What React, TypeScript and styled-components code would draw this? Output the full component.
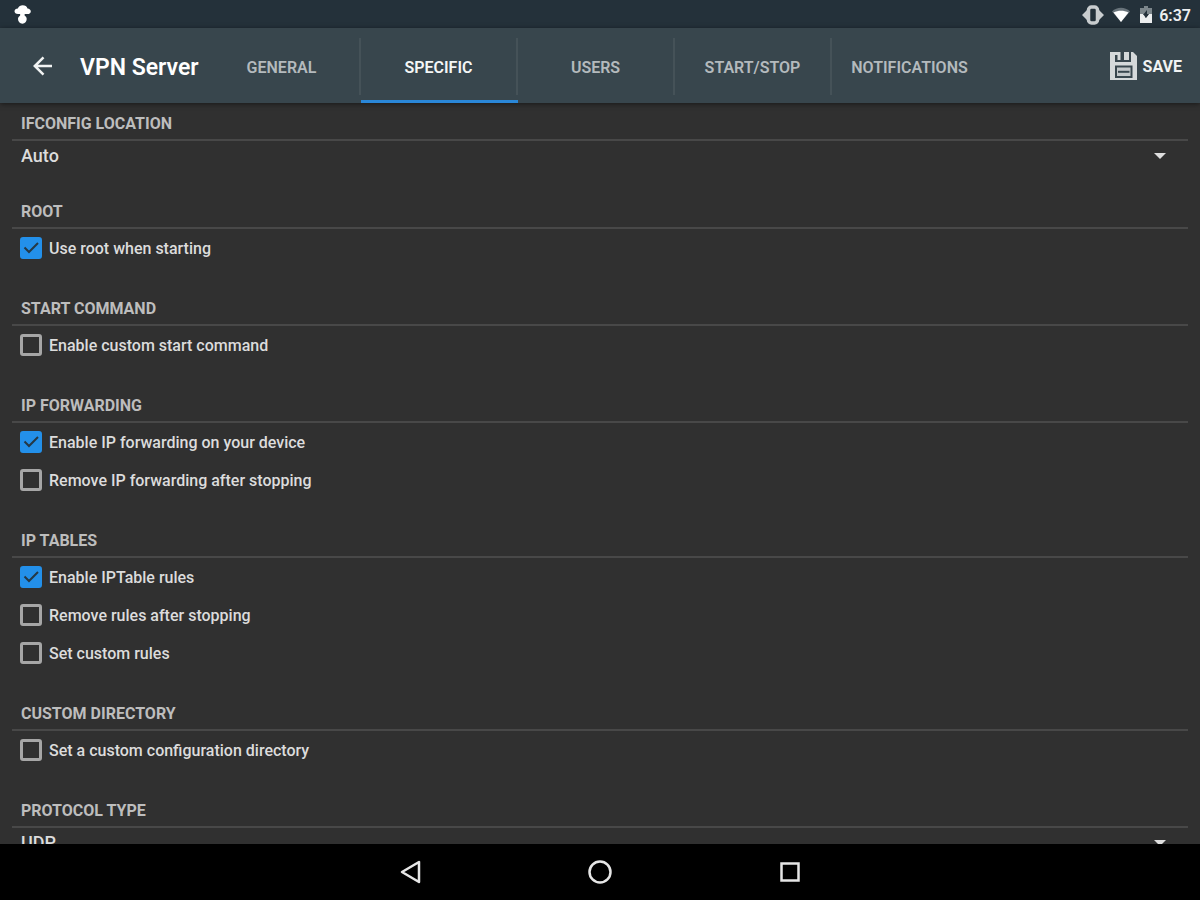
import React, { useState } from "react";
import styled, { createGlobalStyle } from "styled-components";

const GlobalStyle = createGlobalStyle`
  *, *::before, *::after { box-sizing: border-box; }
  body { margin: 0; background: #000; }
  button, select, input { font: inherit; color: inherit; }
`;

const Screen = styled.div`
  display: flex;
  flex-direction: column;
  height: 100vh;
  overflow: hidden;
  background: #303030;
  color: #dcdcdc;
  font-family: Roboto, "Liberation Sans", sans-serif;
  font-size: 16px;
  font-weight: 500;
`;

const StatusBar = styled.header`
  display: flex;
  flex: none;
  align-items: center;
  justify-content: space-between;
  height: 28px;
  padding: 2px 9px 0 13px;
  background: #24313a;
  color: #eceeef;

  svg { display: block; }
`;

const StatusGroup = styled.div`
  display: flex;
  align-items: center;
`;

const StatusIcon = styled.span<{ $gap: number }>`
  margin-right: ${(p) => p.$gap}px;
`;

const Clock = styled.time`
  padding-top: 2px;
  font-weight: 600;
  line-height: 20px;
`;

const Toolbar = styled.div`
  position: relative;
  display: flex;
  flex: none;
  align-items: center;
  height: 75px;
  padding-right: 18px;
  background: #38464d;
  box-shadow: 0 1px 5px rgba(0, 0, 0, 0.5);
`;

const IconButton = styled.button`
  display: flex;
  align-items: center;
  gap: 6px;
  padding: 0;
  border: 0;
  background: none;
  color: #f1f3f3;
  cursor: pointer;
`;

const BackButton = styled(IconButton)`
  margin-left: 32px;
`;

const SaveButton = styled(IconButton)`
  margin-left: auto;
  font-weight: 700;
`;

const Caption = styled.span`
  padding-top: 2px;
`;

const Title = styled.h1`
  flex: none;
  width: 124px;
  margin: 0 0 0 27px;
  padding-top: 4px;
  color: #fff;
  font-size: 23px;
  font-weight: 600;
  line-height: 28px;
  white-space: nowrap;
`;

const Tabs = styled.nav`
  display: flex;
  align-self: stretch;
`;

const Tab = styled.button<{ $active: boolean }>`
  width: 157px;
  padding: 6px 2px 0 0;
  border: 0;
  border-bottom: 3px solid ${(p) => (p.$active ? "#2a87d8" : "transparent")};
  background: linear-gradient(#455258, #455258) right 10px / 2px 57px no-repeat;
  color: ${(p) => (p.$active ? "#f4f6f6" : "#b4babd")};
  font-weight: 600;
  text-align: center;
  cursor: pointer;

  &:last-child { background: none; }
`;

const Content = styled.main`
  flex: 1;
  min-height: 0;
  overflow: hidden;
  padding: 10px 12px 0;
`;

const Section = styled.section`
  margin-bottom: 31px;
`;

const SectionTitle = styled.h2`
  margin: 0;
  padding: 1px 9px 5px;
  border-bottom: 2px solid #484848;
  color: #bdbdbd;
  font-size: 16px;
  font-weight: 700;
  line-height: 20px;
`;

const Option = styled.label`
  display: flex;
  align-items: center;
  gap: 7px;
  height: 38px;
  padding-left: 8px;
  line-height: 20px;
  cursor: pointer;
`;

const BoxFrame = styled.span`
  display: grid;
  width: 22px;
  height: 22px;

  > * { grid-area: 1 / 1; }
  svg { pointer-events: none; }
`;

const Box = styled.input`
  appearance: none;
  width: 22px;
  height: 22px;
  margin: 0;
  border: 3px solid #a6a6a6;
  border-radius: 3px;
  cursor: pointer;

  &:checked {
    border-color: #2390ea;
    background: #2390ea;
  }
`;

const SelectRow = styled.div`
  display: grid;
  align-items: center;
  height: 29px;

  > * { grid-area: 1 / 1; }
  svg {
    justify-self: end;
    margin-right: 22px;
    pointer-events: none;
  }
`;

const Picker = styled.select`
  appearance: none;
  width: 100%;
  height: 29px;
  padding: 0 9px;
  border: 0;
  background: transparent;
  font-size: 18px;
  cursor: pointer;

  option { background: #303030; }
`;

const NavBar = styled.footer`
  display: flex;
  flex: none;
  align-items: center;
  justify-content: center;
  gap: 162px;
  height: 56px;
  background: #000;
`;

const NavButton = styled(IconButton)`
  color: #e6e6e6;
`;

type CheckItem = { label: string; checked: boolean };
type Group = { title: string; choices?: string[]; checks?: CheckItem[] };

const groups: Group[] = [
  { title: "IFCONFIG LOCATION", choices: ["Auto"] },
  { title: "ROOT", checks: [{ label: "Use root when starting", checked: true }] },
  { title: "START COMMAND", checks: [{ label: "Enable custom start command", checked: false }] },
  {
    title: "IP FORWARDING",
    checks: [
      { label: "Enable IP forwarding on your device", checked: true },
      { label: "Remove IP forwarding after stopping", checked: false },
    ],
  },
  {
    title: "IP TABLES",
    checks: [
      { label: "Enable IPTable rules", checked: true },
      { label: "Remove rules after stopping", checked: false },
      { label: "Set custom rules", checked: false },
    ],
  },
  { title: "CUSTOM DIRECTORY", checks: [{ label: "Set a custom configuration directory", checked: false }] },
  { title: "PROTOCOL TYPE", choices: ["UDP", "TCP"] },
];

const tabs = ["GENERAL", "SPECIFIC", "USERS", "START/STOP", "NOTIFICATIONS"];

function CheckOption({ label, checked }: CheckItem) {
  const [on, setOn] = useState(checked);
  return (
    <Option>
      <BoxFrame>
        <Box type="checkbox" checked={on} onChange={(e) => setOn(e.target.checked)} />
        {on && (
          <svg width="22" height="22" viewBox="0 0 22 22" fill="none" stroke="#253845" strokeWidth="2">
            <path d="M4.5 10.5 9 15 18 6" />
          </svg>
        )}
      </BoxFrame>
      <Caption>{label}</Caption>
    </Option>
  );
}

function ChoiceRow({ label, choices }: { label: string; choices: string[] }) {
  return (
    <SelectRow>
      <Picker aria-label={label}>
        {choices.map((c) => (
          <option key={c}>{c}</option>
        ))}
      </Picker>
      <svg width="12" height="6" viewBox="0 0 12 6" fill="#dedede">
        <path d="M0 0h12L6 6z" />
      </svg>
    </SelectRow>
  );
}

export default function App() {
  const [active, setActive] = useState("SPECIFIC");
  return (
    <Screen>
      <GlobalStyle />
      <StatusBar>
        <svg width="20" height="22" viewBox="0 0 20 22" fill="#fff">
          <path d="M5 10C2.800 10 1.500 8.800 1.500 7.300S3 4.700 4.800 4.600C5.800 2.300 7.600 1.300 9.700 1.300c2.500 0 4.100 1.200 4.800 3.200 1.900.2 3.300 1.300 3.300 2.900 0 1.500-1.200 2.600-3.300 2.600h-2.700c-.5 1-.3 1.600.6 2.300.9.700 1.300 1.600 1.300 2.700 0 2.600-1.700 4.700-4.300 4.700S5 17.600 5 15c0-1.100.5-2 1.400-2.700.9-.7 1.100-1.300.6-2.300z" />
        </svg>
        <StatusGroup>
          <StatusIcon $gap={7}>
            <svg width="24" height="20" viewBox="0 0 24 20" fill="#c9cdcf">
              <path d="M7 4v12L1 10zM17 4v12l6-6z" />
              <rect x="7.500" y="2" width="9" height="16" rx="3" fill="#24313a" stroke="#c9cdcf" strokeWidth="3.500" />
            </svg>
          </StatusIcon>
          <StatusIcon $gap={10}>
            <svg width="18" height="16" viewBox="0 0 18 16">
              <path d="M0 4.500C5-.500 13-.500 18 4.500L9 15z" fill="#68737a" />
              <path d="M1.500 5.500C6 3.200 12 3.200 16.500 5.500L9 15z" fill="#fff" />
            </svg>
          </StatusIcon>
          <StatusIcon $gap={7}>
            <svg width="12" height="18" viewBox="0 0 12 18">
              <path d="M4 0h4v2h4v7H0V2h4z" fill="#7c868b" />
              <path d="M0 8h3l3 4 3-4h3v9H0z" fill="#eceeef" />
              <path d="m7 4-4 5h2.500v3l3.500-4H7z" fill="#24313a" />
            </svg>
          </StatusIcon>
          <Clock>6:37</Clock>
        </StatusGroup>
      </StatusBar>

      <Toolbar>
        <BackButton aria-label="Back">
          <svg width="21" height="20" viewBox="0 0 21 20" fill="none" stroke="currentColor" strokeWidth="2.500">
            <path d="M20 10H3M11.500 1.300 2.800 10l8.700 8.700" />
          </svg>
        </BackButton>
        <Title>VPN Server</Title>
        <Tabs>
          {tabs.map((t) => (
            <Tab key={t} $active={t === active} onClick={() => setActive(t)}>
              {t}
            </Tab>
          ))}
        </Tabs>
        <SaveButton>
          <svg width="27" height="28" viewBox="0 0 27 28">
            <path d="M0 0h23l4 4v24H0z" fill="#d5d9da" />
            <path d="M5 0h16v10H5z" fill="#38464d" />
            <path d="M5 0h5.500v8H7.500V3H5zM14 0h5v8h-5z" fill="#d5d9da" />
            <path d="M6 14.500h15.500v10.500H6z" fill="#c3c8ca" stroke="#38464d" strokeWidth="2" />
            <path d="M8 19.800h11.500" stroke="#38464d" strokeWidth="2" />
          </svg>
          <Caption>SAVE</Caption>
        </SaveButton>
      </Toolbar>

      <Content>
        {groups.map((g) => (
          <Section key={g.title}>
            <SectionTitle>{g.title}</SectionTitle>
            {g.choices && <ChoiceRow label={g.title} choices={g.choices} />}
            {g.checks?.map((c) => (
              <CheckOption key={c.label} {...c} />
            ))}
          </Section>
        ))}
      </Content>

      <NavBar>
        <NavButton aria-label="Back">
          <svg width="28" height="28" viewBox="0 0 28 28" fill="none" stroke="currentColor" strokeWidth="2.500" strokeLinejoin="round">
            <path d="M23 4v20L6 14z" />
          </svg>
        </NavButton>
        <NavButton aria-label="Home">
          <svg width="28" height="28" viewBox="0 0 28 28" fill="none" stroke="currentColor" strokeWidth="2.500">
            <circle cx="14" cy="14" r="10.500" />
          </svg>
        </NavButton>
        <NavButton aria-label="Recent apps">
          <svg width="28" height="28" viewBox="0 0 28 28" fill="none" stroke="currentColor" strokeWidth="2.500">
            <path d="M5.500 5.500h17v17h-17z" />
          </svg>
        </NavButton>
      </NavBar>
    </Screen>
  );
}
